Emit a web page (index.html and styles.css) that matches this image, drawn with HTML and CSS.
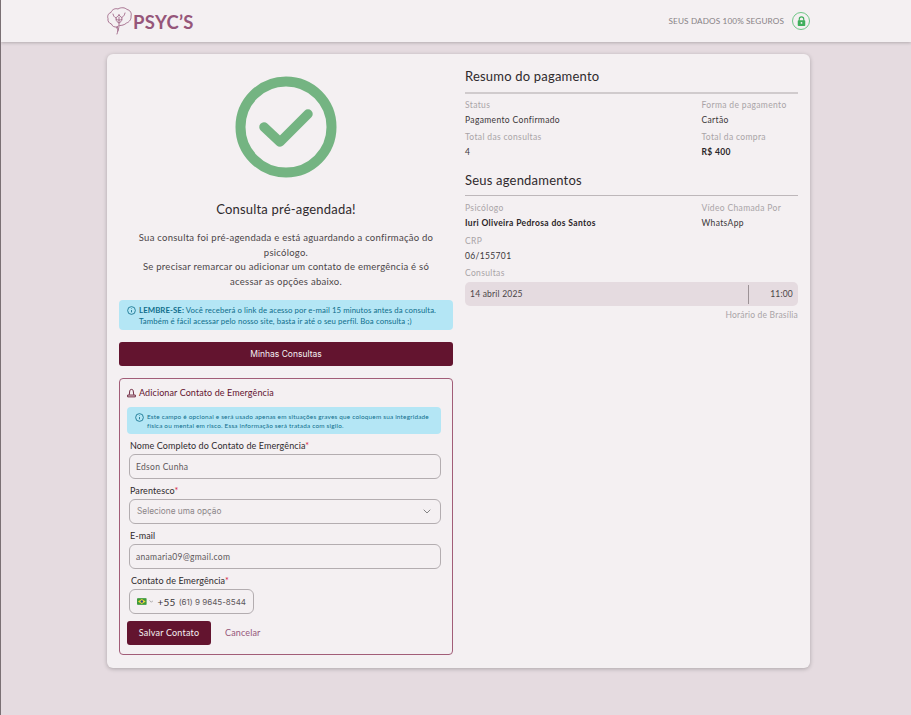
FILE: index.html
```html
<!DOCTYPE html>
<html lang="pt-BR">
<head>
    <meta charset="UTF-8">
    <meta name="viewport" content="width=device-width, initial-scale=1.0">
    <title>Psyc's - Consulta pré-agendada</title>
    <link rel="stylesheet" href="styles.css">
</head>
<body>
    <header class="topbar">
        <div class="logo">
            <svg class="logo-mark" width="26" height="28" viewBox="0 0 26 28" fill="none" stroke="#96567a" stroke-width="0.8" stroke-linecap="round" stroke-linejoin="round">
                <path d="M10 20c-3 .5-5-1-5.500-3C2 16.500.5 14 1 11.500 0 9 1.500 6 4 5.500 5 2.500 8 1 11 2c3-2 7-1.500 9 .5 3 .5 5 3.500 4 6.500 .5 3-1.500 6-4.500 7-2 2-5 2.500-7 2.500-2 .5-3 1.500-3 2.500"/>
                <path d="M10.500 20.500c.5 2 .5 4-.5 6.500M12 19.500c-.5 2-.5 3-1 4.500"/>
                <path d="M12 8c-2 1.500-3.200 3-3 4.500s1.700 3 3 3.500c1.300-.5 2.800-2 3-3.500S14 9.500 12 8z"/>
                <path d="M12 10v8M9.500 12.500c1.500.8 3.500.8 5 0"/>
                <path d="M6 7c.5 2 1 3 3 4M18 6c-.5 2-1 3-3 4.500"/>
            </svg>
            <span class="logo-text">PSYC’S</span>
        </div>
        <div class="secure">
            <span>SEUS DADOS 100% SEGUROS</span>
            <span class="lock-ring">
                <svg width="12" height="13" viewBox="0 0 12 13">
                    <path d="M3 6V4a3 3 0 0 1 6 0v2" fill="none" stroke="#3fae5c" stroke-width="1.500"/>
                    <rect x="1" y="5.500" width="10" height="7.500" rx="1" fill="#3fae5c"/>
                    <circle cx="6" cy="9" r="1.200" fill="#f4f0f2"/>
                </svg>
            </span>
        </div>
    </header>

    <main class="card">
        <section class="left">
            <svg class="check" width="102" height="102" viewBox="0 0 102 102" fill="none" stroke="#74b482" stroke-linecap="round" stroke-linejoin="round">
                <circle cx="51" cy="51" r="45.500" stroke-width="10"/>
                <path d="M29 51l16 15 28-28" stroke-width="9.500"/>
            </svg>
            <h1 class="done-title">Consulta pré-agendada!</h1>
            <p class="done-text">Sua consulta foi pré-agendada e está aguardando a confirmação do psicólogo.<br>Se precisar remarcar ou adicionar um contato de emergência é só acessar as opções abaixo.</p>

            <div class="notice">
                <svg class="info" width="9" height="9" viewBox="0 0 10 10" fill="none" stroke="#0a6c8a" stroke-width="0.9"><circle cx="5" cy="5" r="4.300"/><path d="M5 4.500v2.500M5 2.700v.6"/></svg>
                <p><b>LEMBRE-SE:</b> Você receberá o link de acesso por e-mail 15 minutos antes da consulta. Também é fácil acessar pelo nosso site, basta ir até o seu perfil. Boa consulta ;)</p>
            </div>

            <button class="btn-wide" type="button">Minhas Consultas</button>

            <form class="emergency">
                <h2 class="emergency-title">
                    <svg width="9" height="10" viewBox="0 0 10 10" fill="none" stroke="#63142f" stroke-width="1"><path d="M2.500 7l.6-4.500c.1-1 .9-1.500 1.900-1.500s1.800.5 1.900 1.500l.6 4.500M.7 9.300h8.600v-2H.7z"/></svg>
                    Adicionar Contato de Emergência
                </h2>
                <div class="notice notice-small">
                    <svg class="info" width="9" height="9" viewBox="0 0 10 10" fill="none" stroke="#0a6c8a" stroke-width="0.9"><circle cx="5" cy="5" r="4.300"/><path d="M5 4.500v2.500M5 2.700v.6"/></svg>
                    <p>Este campo é opcional e será usado apenas em situações graves que coloquem sua integridade física ou mental em risco. Essa informação será tratada com sigilo.</p>
                </div>

                <label class="field-label">Nome Completo do Contato de Emergência<i>*</i></label>
                <div class="input">Edson Cunha</div>

                <label class="field-label">Parentesco<i>*</i></label>
                <div class="input input-select">
                    <span>Selecione uma opção</span>
                    <svg width="8" height="5" viewBox="0 0 8 5" fill="none" stroke="#777" stroke-width="0.9"><path d="M.7.7L4 4 7.300.7"/></svg>
                </div>

                <label class="field-label">E-mail</label>
                <div class="input">anamaria09@gmail.com</div>

                <label class="field-label field-label-phone">Contato de Emergência<i>*</i></label>
                <div class="input input-phone">
                    <svg class="flag" width="10" height="7" viewBox="0 0 10 7"><rect width="10" height="7" fill="#3f9b3c"/><path d="M5 .8L9 3.500 5 6.200 1 3.500z" fill="#f0d93a"/><circle cx="5" cy="3.500" r="1.300" fill="#2a4a8c"/></svg>
                    <svg width="5" height="3" viewBox="0 0 6 4" fill="none" stroke="#777" stroke-width="0.8"><path d="M.5.5L3 3 5.500.5"/></svg>
                    <span class="dial">+55</span>
                    <span class="phone">(61) 9 9645-8544</span>
                </div>

                <div class="actions">
                    <button class="btn-save" type="button">Salvar Contato</button>
                    <a class="cancel" href="#">Cancelar</a>
                </div>
            </form>
        </section>

        <section class="right">
            <h2 class="section-title">Resumo do pagamento</h2>
            <hr class="rule rule-thick">
            <div class="info-grid info-grid-tight">
                <div><span class="key">Status</span><span class="val">Pagamento Confirmado</span></div>
                <div><span class="key">Forma de pagamento</span><span class="val">Cartão</span></div>
                <div><span class="key">Total das consultas</span><span class="val">4</span></div>
                <div><span class="key">Total da compra</span><span class="val val-bold">R$ 400</span></div>
            </div>

            <h2 class="section-title section-title-next">Seus agendamentos</h2>
            <hr class="rule">
            <div class="info-grid">
                <div><span class="key">Psicólogo</span><span class="val val-bold">Iuri Oliveira Pedrosa dos Santos</span></div>
                <div><span class="key">Vídeo Chamada Por</span><span class="val">WhatsApp</span></div>
                <div><span class="key">CRP</span><span class="val">06/155701</span></div>
            </div>
            <span class="key key-slots">Consultas</span>
            <div class="slot">
                <span>14 abril 2025</span>
                <span class="slot-time">11:00</span>
            </div>
            <p class="tz">Horário de Brasília</p>
        </section>
    </main>
</body>
</html>
```

FILE: styles.css
```css
* {
    box-sizing: border-box;
}
body {
    margin: 0;
    min-height: 715px;
    background: #e5dbe0;
    font-family: Lato, "Open Sans", sans-serif;
    color: #2f2a2d;
    border-left: 1px solid #7a7074;
}
p, h1, h2 {
    margin: 0;
    font-weight: 400;
}

/* topo */
.topbar {
    height: 42px;
    padding: 0 101px 0 106px;
    display: flex;
    align-items: center;
    justify-content: space-between;
    background: #f4f0f2;
    box-shadow: 0 1px 3px rgba(0,0,0,0.22);
}
.logo {
    display: flex;
    align-items: center;
    gap: 0;
}
.logo-text {
    font-size: 18.500px;
    font-weight: 700;
    color: #96567a;
    letter-spacing: 0.3px;
    margin-top: 1px;
}
.secure {
    display: flex;
    align-items: center;
    gap: 8px;
    font-size: 8.200px;
    color: #878285;
    letter-spacing: 0.12px;
}
.lock-ring {
    width: 18px;
    height: 18px;
    border: 1px solid #6fc787;
    border-radius: 50%;
    display: flex;
    align-items: center;
    justify-content: center;
}
.lock-ring svg {
    width: 9px;
    height: 10px;
}

/* cartao */
.card {
    width: 703px;
    height: 614px;
    margin: 12px 0 0 106px;
    padding: 0 12px;
    display: flex;
    gap: 12px;
    background: #f4f0f2;
    border-radius: 6px;
    box-shadow: 0 1px 4px rgba(0,0,0,0.25);
}
.left {
    width: 334px;
    padding-top: 22px;
    display: flex;
    flex-direction: column;
}
.right {
    width: 333px;
    padding-top: 14px;
}

.check {
    display: block;
    margin: 0 auto;
}
.done-title {
    margin-top: 22px;
    text-align: center;
    font-size: 13px;
    line-height: 18px;
    letter-spacing: 0.2px;
}
.done-text {
    margin-top: 13px;
    padding: 0 15px;
    text-align: center;
    font-size: 9.500px;
    line-height: 14.700px;
    letter-spacing: 0.26px;
    color: #4b4548;
}

.notice {
    padding: 5px 8px;
    display: flex;
    gap: 3px;
    background: #b4e6f5;
    border-radius: 4px;
    color: #0f6e8c;
    font-size: 7.800px;
    line-height: 11px;
    font-weight: 700;
    letter-spacing: 0.08px;
}
.left > .notice {
    margin-top: 10px;
    height: 30px;
}
.info {
    flex: none;
    margin-top: 1px;
}
.btn-wide {
    height: 24px;
    margin-top: 12px;
    border: none;
    border-radius: 3px;
    background: #63142f;
    color: #f4f0f2;
    font-family: Inter, sans-serif;
    font-size: 8.500px;
}

/* contato de emergencia */
.emergency {
    height: 277px;
    margin-top: 12px;
    padding: 0 7px;
    border: 1px solid #a25d78;
    border-radius: 4px;
}
.emergency-title {
    display: flex;
    align-items: center;
    gap: 3px;
    height: 26px;
    margin-top: 1px;
    font-size: 9px;
    color: #63142f;
    letter-spacing: 0.1px;
}
.notice-small {
    width: 314px;
    height: 27px;
    margin: 1px 0 3px;
    padding: 5px 8px;
    font-size: 6.400px;
    line-height: 9.500px;
    letter-spacing: 0.2px;
    gap: 3px;
}
.notice-small .info {
    margin-top: 1px;
}
.field-label {
    display: block;
    margin: 7px 0 0 3px;
    font-size: 9px;
    line-height: 10px;
    letter-spacing: 0.1px;
    color: #2f2a2d;
}
.field-label i {
    font-style: normal;
    color: #d6223c;
}
.field-label-phone {
    margin-left: 4px;
}
.input {
    width: 312px;
    height: 25px;
    margin: 3px 0 0 2px;
    padding: 1px 7px 0 6px;
    display: flex;
    align-items: center;
    border: 1px solid #b3adb0;
    border-radius: 6px;
    font-size: 8.500px;
    letter-spacing: 0.3px;
    color: #5d575a;
}
.input-select {
    justify-content: space-between;
    padding: 0 9px 0 7px;
    font-family: Inter, sans-serif;
    font-size: 8.300px;
    letter-spacing: 0;
    color: #8b8588;
}
.input-phone {
    width: 125px;
    gap: 2px;
    padding-left: 7px;
    white-space: nowrap;
}
.flag {
    border-radius: 1px;
}
.dial {
    margin-left: 2px;
    font-size: 10px;
    color: #3b3639;
}
.phone {
    margin-left: 1px;
    font-family: Inter, sans-serif;
    font-size: 8px;
    letter-spacing: 0;
}
.actions {
    margin-top: 7px;
    display: flex;
    align-items: center;
    gap: 14px;
}
.btn-save {
    width: 84px;
    height: 24px;
    border: none;
    border-radius: 3px;
    background: #63142f;
    color: #f4f0f2;
    font-family: Lato, sans-serif;
    font-size: 9px;
    letter-spacing: 0.2px;
}
.cancel {
    color: #96567a;
    font-size: 9px;
    letter-spacing: 0.15px;
    text-decoration: none;
}

/* coluna direita */
.section-title {
    font-size: 13px;
    line-height: 16px;
    letter-spacing: 0.2px;
}
.section-title-next {
    margin-top: 11px;
}
.rule {
    height: 1px;
    margin: 7px 0 0;
    border: none;
    background: #bdb7ba;
}
.rule-thick {
    height: 2px;
    margin-top: 8px;
    background: #d0cbcd;
}
.info-grid {
    display: grid;
    grid-template-columns: 236.500px 1fr;
    margin-top: 4px;
}
.info-grid > div {
    height: 33px;
}
.info-grid-tight {
    margin-top: 3px;
}
.info-grid-tight > div {
    height: 32px;
}
.key {
    display: block;
    font-size: 8.500px;
    line-height: 16px;
    letter-spacing: 0.35px;
    color: #a9a4a7;
}
.val {
    display: block;
    font-size: 8.500px;
    line-height: 15px;
    letter-spacing: 0.35px;
    color: #3b3639;
}
.val-bold {
    font-weight: 700;
    color: #2a2528;
}
.key-slots {
    margin-top: -1px;
}
.slot {
    height: 24px;
    margin-top: 1px;
    padding: 0 5px;
    display: flex;
    align-items: center;
    justify-content: space-between;
    background: #e5dbe0;
    border-radius: 5px;
    font-size: 8.500px;
    letter-spacing: 0.2px;
    color: #4b4548;
}
.slot-time {
    width: 45px;
    height: 19px;
    line-height: 19px;
    text-align: right;
    border-left: 1px solid #9c9296;
}
.tz {
    margin-top: 2px;
    text-align: right;
    font-size: 8.500px;
    line-height: 14px;
    letter-spacing: 0.2px;
    color: #a9a4a7;
}
```
